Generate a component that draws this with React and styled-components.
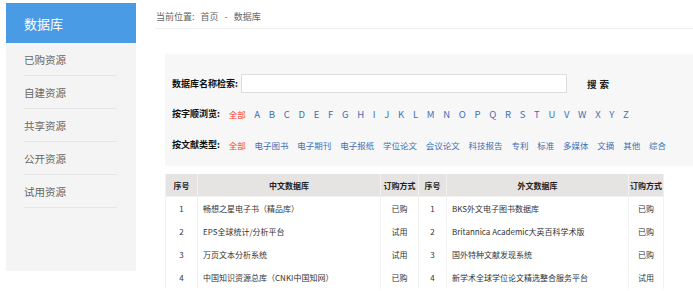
import styled, { createGlobalStyle } from "styled-components";

const GlobalStyle = createGlobalStyle`
  body {
    margin: 0;
    background: #fff;
    font-family: "Noto Sans CJK SC", "Liberation Sans", sans-serif;
  }
`;

const Page = styled.div`
  display: flex;
  align-items: flex-start;
  padding: 3px 0 0 6px;
  width: 693px;
  height: 291px;
  box-sizing: border-box;
  overflow: hidden;
`;

const Sidebar = styled.div`
  width: 130px;
  height: 268px;
  flex-shrink: 0;
  background: #f4f4f4;
`;

const SideHead = styled.div`
  height: 40px;
  background: #4a9be6;
  color: #fff;
  font-size: 13px;
  display: flex;
  align-items: center;
  padding-left: 18px;
`;

const SideItem = styled.div`
  height: 32px;
  margin: 0 19px 0 18px;
  border-bottom: 1px solid #e6e6e6;
  display: flex;
  align-items: center;
  font-size: 10.5px;
  color: #666;
`;

const Main = styled.div`
  flex: 1;
  margin-left: 19px;
  min-width: 0;
`;

const Crumb = styled.div`
  height: 26px;
  padding: 2px 0 0 1px;
  box-sizing: border-box;
  display: flex;
  align-items: center;
  gap: 6px;
  font-size: 9px;
  color: #666;
  border-bottom: 1px solid #eee;
`;

const Panel = styled.div`
  margin: 25px 0 0 10px;
  height: 112px;
  box-sizing: border-box;
  background: #f7f7f7;
  padding: 20px 0 11px 7px;
  display: flex;
  flex-direction: column;
  gap: 10px;
`;

const Row = styled.div`
  display: flex;
  align-items: center;
  height: ${(p) => p.$h || 21}px;
  gap: ${(p) => p.$gap || 9}px;
  font-size: 9px;
`;

const Label = styled.span`
  font-weight: bold;
  color: #111;
  font-size: 9px;
`;

const SearchInput = styled.input`
  width: 326px;
  height: 19px;
  box-sizing: border-box;
  border: 1px solid #ddd;
  background: #fff;
  outline: none;
  margin-left: -6px;
`;

const SearchBtn = styled.span`
  margin-left: 11px;
  font-weight: bold;
  font-size: 9.5px;
  letter-spacing: 3px;
  color: #222;
`;

const Link = styled.span`
  color: ${(p) => (p.$active ? "#f33" : "#3f6fb3")};
  font-size: ${(p) => p.$size || 8.5}px;
`;

const Table = styled.table`
  margin: 8px 0 0 10px;
  width: 498px;
  border-collapse: collapse;
  table-layout: fixed;
  font-size: 8px;
  color: #333;
`;

const Th = styled.th`
  height: 22px;
  padding: 0;
  background: #e6e4e2;
  border: 1px solid #f2f1f0;
  border-top: none;
  font-weight: bold;
  color: #222;
  text-align: center;
`;

const Td = styled.td`
  height: 23px;
  padding: 0 ${(p) => (p.$left ? "5px" : "0")};
  border-left: 1px solid #f2f2f2;
  border-right: 1px solid #f2f2f2;
  text-align: ${(p) => (p.$left ? "left" : "center")};
  white-space: nowrap;
  overflow: hidden;
`;

const letters = "ABCDEFGHIJKLMNOPQRSTUVWXYZ".split("");
const types = ["电子图书", "电子期刊", "电子报纸", "学位论文", "会议论文", "科技报告", "专利", "标准", "多媒体", "文摘", "其他", "综合"];
const rows = [
  ["畅想之星电子书（精品库）", "已购", "BKS外文电子图书数据库", "已购"],
  ["EPS全球统计/分析平台", "试用", "Britannica Academic大英百科学术版", "已购"],
  ["万页文本分析系统", "试用", "国外特种文献发现系统", "已购"],
  ["中国知识资源总库（CNKI中国知网）", "已购", "新学术全球学位论文精选整合服务平台", "试用"],
];

export default function App() {
  return (
    <>
      <GlobalStyle />
      <Page>
        <Sidebar>
          <SideHead>数据库</SideHead>
          {["已购资源", "自建资源", "共享资源", "公开资源", "试用资源"].map((s) => (
            <SideItem key={s}>{s}</SideItem>
          ))}
        </Sidebar>
        <Main>
          <Crumb>
            <span>当前位置:</span>
            <span>首页</span>
            <span>-</span>
            <span>数据库</span>
          </Crumb>
          <Panel>
            <Row $h={19}>
              <Label>数据库名称检索:</Label>
              <SearchInput />
              <SearchBtn>搜索</SearchBtn>
            </Row>
            <Row $gap={8.7}>
              <Label>按字顺浏览:</Label>
              <Link $active>全部</Link>
              {letters.map((l) => (
                <Link key={l} $size={9.5}>{l}</Link>
              ))}
            </Row>
            <Row $gap={8.8}>
              <Label>按文献类型:</Label>
              <Link $active>全部</Link>
              {types.map((t) => (
                <Link key={t}>{t}</Link>
              ))}
            </Row>
          </Panel>
          <Table>
            <colgroup>
              <col style={{ width: 32 }} />
              <col style={{ width: 183 }} />
              <col style={{ width: 38 }} />
              <col style={{ width: 28 }} />
              <col style={{ width: 182 }} />
              <col style={{ width: 35 }} />
            </colgroup>
            <thead>
              <tr>
                <Th>序号</Th>
                <Th>中文数据库</Th>
                <Th>订购方式</Th>
                <Th>序号</Th>
                <Th>外文数据库</Th>
                <Th>订购方式</Th>
              </tr>
            </thead>
            <tbody>
              {rows.map((r, i) => (
                <tr key={i}>
                  <Td>{i + 1}</Td>
                  <Td $left>{r[0]}</Td>
                  <Td>{r[1]}</Td>
                  <Td>{i + 1}</Td>
                  <Td $left>{r[2]}</Td>
                  <Td>{r[3]}</Td>
                </tr>
              ))}
            </tbody>
          </Table>
        </Main>
      </Page>
    </>
  );
}
